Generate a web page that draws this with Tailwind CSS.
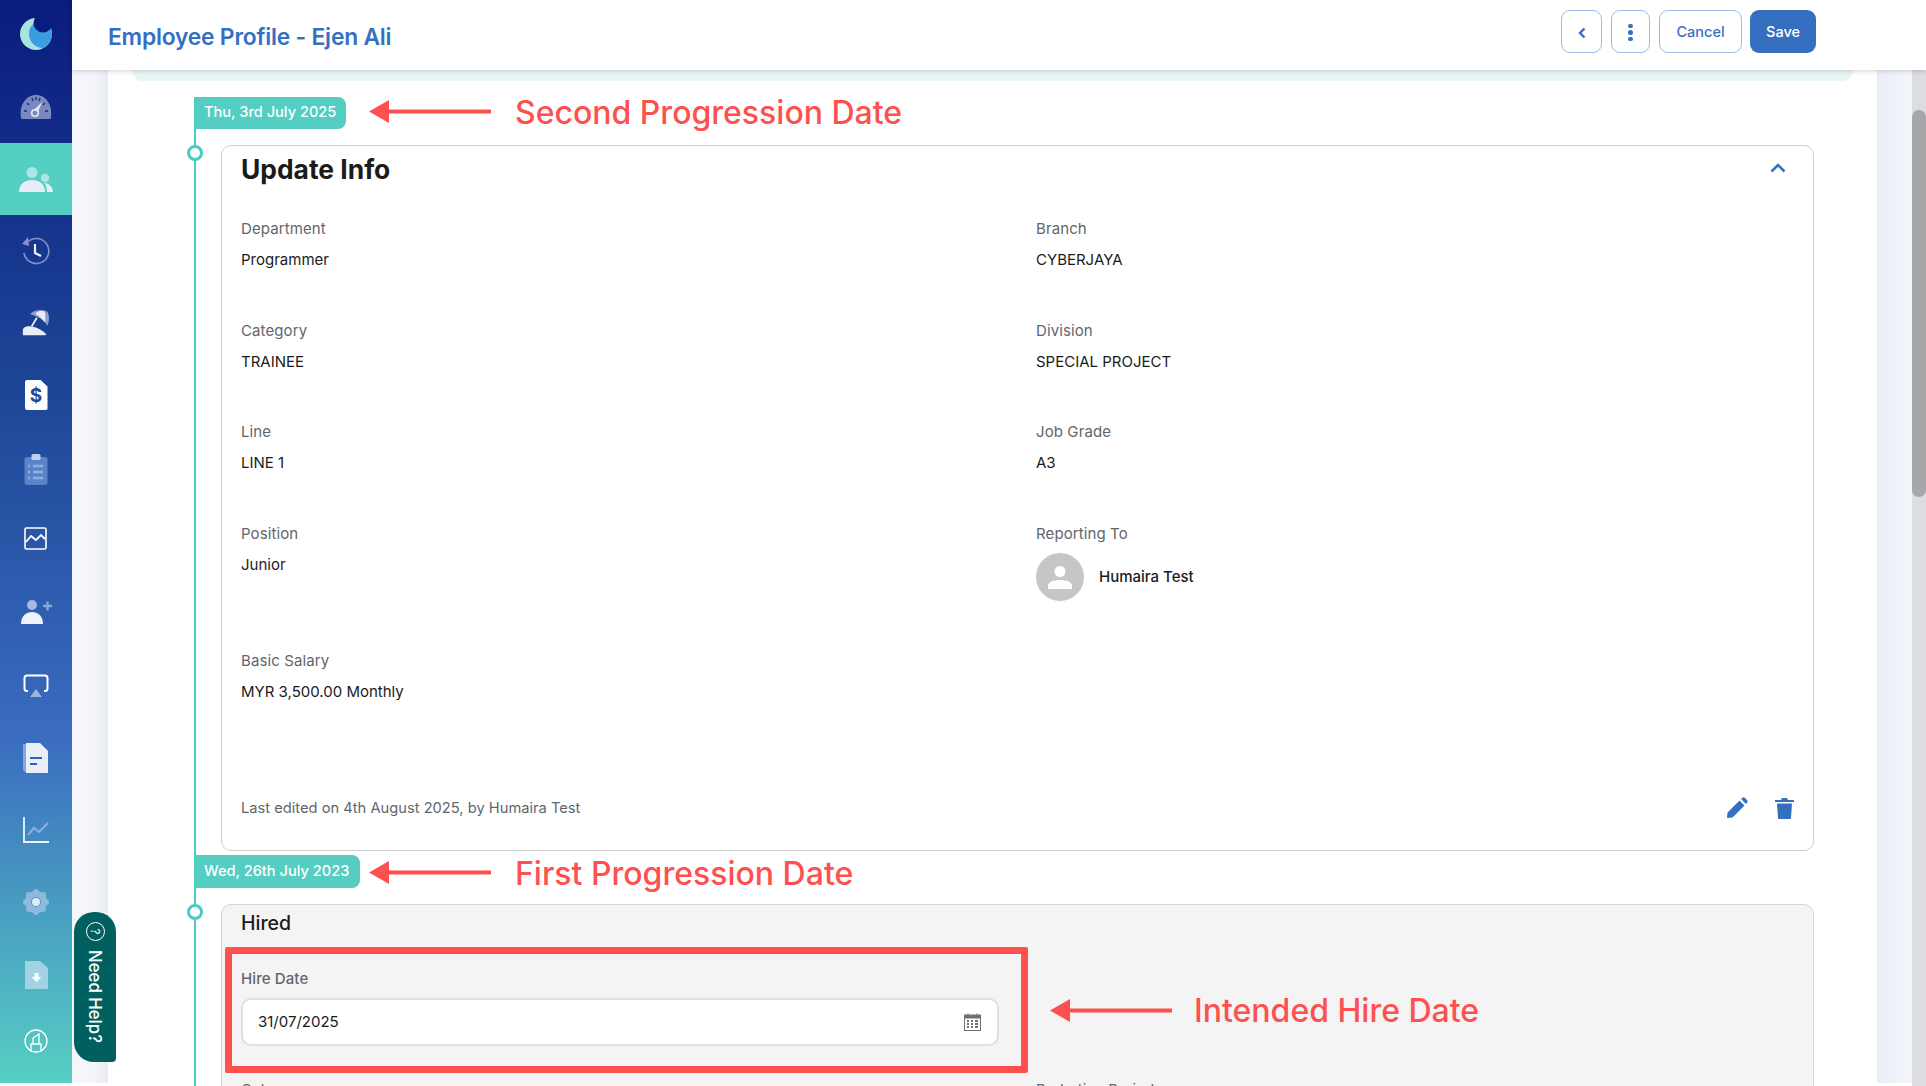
<!DOCTYPE html>
<html lang="en">
<head>
  <meta charset="UTF-8" />
  <title>Employee Profile - Ejen Ali</title>
  <script src="https://cdn.jsdelivr.net/npm/@tailwindcss/browser@4"></script>
</head>
<body class="bg-white font-['Inter','Liberation_Sans',sans-serif]">
<div class="relative flex h-[1086px] w-[1926px] overflow-hidden bg-white">

  <!-- Sidebar -->
  <aside class="flex h-[1083px] w-[72px] shrink-0 flex-col items-center bg-[linear-gradient(180deg,#0a1c7e_0%,#1f4899_38%,#3a6cbf_68%,#57cfc4_100%)]">
    <div class="flex h-[71px] w-full items-center justify-center pb-[3px]">
      <svg class="h-[40px] w-[40px]" viewBox="0 0 40 40"><defs><clipPath id="moon"><circle cx="20" cy="20" r="16"/></clipPath></defs><circle cx="20" cy="20" r="16" fill="#a5e4df"/><circle cx="27" cy="20" r="14" fill="#3a9ddd" clip-path="url(#moon)"/><circle cx="27" cy="9" r="9.5" fill="#0a1c7e"/></svg>
    </div>
    <div class="flex h-[72px] w-full items-center justify-center">
      <svg class="h-[36px] w-[36px]" viewBox="0 0 36 36"><path d="M3 29 C1 16 8 6 18 6 C28 6 35 16 33 29 Q33 30 31 30 H5 Q3 30 3 29Z" fill="#7b88bf"/><path d="M6 22h3M27 22h3M9 14l2 2M27 14l-2 2M14 9l1 3M22 9l-1 3M18 8v3" stroke="#1b2f86" stroke-width="1.5"/><path d="M24 13 L20 23 L16 21Z" fill="#e6eaf6"/><circle cx="17" cy="24" r="3.3" fill="none" stroke="#e6eaf6" stroke-width="1.6"/></svg>
    </div>
    <div class="flex h-[72px] w-full items-center justify-center bg-[#56cfc3]">
      <svg class="mt-[5px] h-[36px] w-[36px]" viewBox="0 0 36 36"><circle cx="14" cy="8.5" r="5.5" fill="#abe6e1"/><circle cx="27" cy="14" r="4.2" fill="#abe6e1"/><path d="M1 28 C1 20 7 16 14 16 C21 16 27 20 27 28Z" fill="#e8eef8"/><path d="M26 19 C31 19 35 23 35 28 H29 C29 24 28 21 26 19Z" fill="#e8eef8"/></svg>
    </div>
    <div class="flex h-[72px] w-full items-center justify-center">
      <svg class="h-[30px] w-[30px]" viewBox="0 0 30 30"><path d="M5 8 A12.5 12.5 0 1 1 3 17" fill="none" stroke="#8591c6" stroke-width="1.6"/><path d="M7 1 L8 10 L1 8Z" fill="#8591c6"/><path d="M14 8 V17 L20 20" fill="none" stroke="#eef1fa" stroke-width="2.2"/></svg>
    </div>
    <div class="flex h-[72px] w-full items-center justify-center">
      <svg class="h-[28px] w-[28px]" viewBox="0 0 32 32"><path d="M9 6 C14 0 24 0 29 3 C32 8 31 15 29 19 C25 12 17 8 9 6Z" fill="#8c9ccc"/><path d="M15 5 C19 2 24 2 26 3 C27 7 27 12 26 15 C23 11 19 8 15 5Z" fill="#e6ebf7"/><path d="M17 10 L11 20" stroke="#e6ebf7" stroke-width="2"/><path d="M1 30 V24 C1 21 6 19 11 20 C18 21 24 25 28 29 L26 30Z" fill="#e8edf8"/></svg>
    </div>
    <div class="flex h-[72px] w-full items-center justify-center">
      <div class="relative flex h-[30px] w-[23px] items-center justify-center rounded-[2px] bg-white [clip-path:polygon(0_0,70%_0,100%_22%,100%_100%,0_100%)]">
        <span class="text-[19px] leading-none font-bold text-[#1f4899]">$</span>
      </div>
    </div>
    <div class="flex h-[72px] w-full items-center justify-center">
      <svg class="mt-[4px] h-[32px] w-[24px]" viewBox="0 0 24 32"><rect x="0.500" y="4" width="23" height="28" rx="2.500" fill="#5b84c8"/><rect x="7.500" y="1" width="9" height="6" rx="1.5" fill="#bcd0ec"/><path d="M9 13h10M9 19h10M9 25h10" stroke="#92aedd" stroke-width="2.400"/><path d="M4 13h2M4 19h2M4 25h2" stroke="#92aedd" stroke-width="2.400"/></svg>
    </div>
    <div class="flex h-[72px] w-full items-center justify-center">
      <svg class="h-[24px] w-[24px]" viewBox="0 0 24 24"><rect x="1" y="1" width="21" height="21" rx="1.5" fill="none" stroke="#fff" stroke-width="1.6"/><path d="M2 15 L7 9 L12 13 L17 8 L21 12" fill="none" stroke="#fff" stroke-width="1.8"/></svg>
    </div>
    <div class="flex h-[72px] w-full items-center justify-center">
      <svg class="mt-[3px] h-[30px] w-[32px]" viewBox="0 0 32 30"><circle cx="12" cy="7" r="5" fill="#a4b9df"/><path d="M1 26 C1 18 6 14 12 14 C18 14 23 18 23 26Z" fill="#eef2fa"/><path d="M23 8h9M27.5 3.500v9" stroke="#8ba6d7" stroke-width="2.400"/></svg>
    </div>
    <div class="flex h-[72px] w-full items-center justify-center">
      <svg class="mt-[6px] h-[24px] w-[26px]" viewBox="0 0 26 24"><path d="M5 17 H4 Q1.500 17 1.500 14.500 V4 Q1.500 1.500 4 1.500 H22 Q24.500 1.500 24.500 4 V14.500 Q24.500 17 22 17 H21" fill="none" stroke="#fff" stroke-width="2"/><path d="M13 15 L19 23 H7Z" fill="#9db5df"/></svg>
    </div>
    <div class="flex h-[78px] w-full items-center justify-center">
      <svg class="h-[32px] w-[26px]" viewBox="0 0 26 32"><path d="M0 2 H4 V30 H3 Q0 30 0 27Z" fill="#87a6dc"/><path d="M3 1 H17 L25 9 V31 H3Z" fill="#e9eff9"/><path d="M7 16h12M7 22h7" stroke="#2e62b8" stroke-width="2.200"/></svg>
    </div>
    <div class="flex h-[66px] w-full items-center justify-center">
      <svg class="h-[28px] w-[28px]" viewBox="0 0 28 28"><path d="M2 1 V26 H27" fill="none" stroke="#eef3fb" stroke-width="1.800"/><path d="M6 19 L12 12 L17 16 L26 7" fill="none" stroke="#8eb0de" stroke-width="2"/></svg>
    </div>
    <div class="flex h-[78px] w-full items-center justify-center">
      <svg class="h-[26px] w-[26px]" viewBox="0 0 26 26"><circle cx="13" cy="13" r="8" fill="none" stroke="#8db9dd" stroke-width="6"/><g fill="#8db9dd"><circle cx="13" cy="3" r="3"/><circle cx="13" cy="23" r="3"/><circle cx="3" cy="13" r="3"/><circle cx="23" cy="13" r="3"/><circle cx="6" cy="6" r="3"/><circle cx="20" cy="6" r="3"/><circle cx="6" cy="20" r="3"/><circle cx="20" cy="20" r="3"/></g><circle cx="13" cy="13" r="4" fill="#dcedf6"/></svg>
    </div>
    <div class="flex h-[66px] w-full items-center justify-center">
      <svg class="h-[29px] w-[23px]" viewBox="0 0 23 29"><path d="M0 1 H15 L23 8 V29 H0Z" fill="#a3d2e2"/><path d="M9.500 13h4v4h3l-5 5-5-5h3Z" fill="#fff"/></svg>
    </div>
    <div class="flex h-[68px] w-full items-center justify-center">
      <svg class="h-[24px] w-[24px]" viewBox="0 0 24 24"><circle cx="12" cy="12" r="11" fill="none" stroke="#fff" stroke-width="1.300"/><path d="M7 23 V15 H17 V23 M9 15 V9 L15 5 V15" fill="none" stroke="#fff" stroke-width="1.300"/></svg>
    </div>
  </aside>

  <!-- Right of the sidebar -->
  <div class="flex min-w-0 flex-1 flex-col">
    <header class="z-10 flex h-[70px] shrink-0 items-start justify-between bg-white pr-[110px] pl-[36px] shadow-[0_1px_5px_rgba(0,0,0,0.18)]">
      <h1 class="mt-[22px] text-[22.800px] leading-[30px] font-semibold tracking-[-0.2px] text-[#3570c0]">Employee Profile - Ejen Ali</h1>
      <div class="mt-[10px] flex items-center">
        <button class="flex h-[43px] w-[41px] items-center justify-center rounded-[9px] border border-[#9dbbe5]">
          <svg class="mt-[3px] h-[12px] w-[8px]" viewBox="0 0 8 12"><path d="M6.500 1.500 L2 6 L6.500 10.500" fill="none" stroke="#3570c0" stroke-width="2.400"/></svg>
        </button>
        <button class="ml-[9px] flex h-[43px] w-[39px] flex-col items-center justify-center gap-[2px] rounded-[9px] border border-[#9dbbe5] pt-[2px]">
          <span class="h-[4.500px] w-[4.500px] rounded-full bg-[#3570c0]"></span>
          <span class="h-[4.500px] w-[4.500px] rounded-full bg-[#3570c0]"></span>
          <span class="h-[4.500px] w-[4.500px] rounded-full bg-[#3570c0]"></span>
        </button>
        <button class="ml-[9px] h-[43px] w-[83px] rounded-[9px] border border-[#9dbbe5] text-[14.500px] font-medium text-[#3570c0]">Cancel</button>
        <button class="ml-[8px] h-[43px] w-[66px] rounded-[9px] bg-[#3570c0] text-[14.500px] font-medium text-white">Save</button>
      </div>
    </header>

    <div class="flex min-h-0 flex-1">
      <div class="h-[1013px] w-[36px] shrink-0 bg-[linear-gradient(90deg,#f4f6fc_60%,#e8ebf2_100%)]"></div>

      <main class="h-[1016px] min-w-0 flex-1 overflow-hidden bg-white">
        <div class="mx-[24px] h-[11px] rounded-b-[12px] bg-[#e8f7f5]"></div>

        <!-- Timeline -->
        <div class="mt-[16px] ml-[86px] w-[1620px] border-l-2 border-[#4ccbc1]">
          <div class="flex h-[32px] w-[150px] items-center rounded-r-[8px] bg-[#54cdc3] pl-[8px] text-[14.600px] font-medium whitespace-nowrap text-white">Thu, 3rd July 2025</div>

          <div class="relative mt-[16px] ml-[25px] h-[706px] w-[1593px] rounded-[10px] border border-[#cfcfd1] bg-white px-[19px]">
            <span class="absolute top-[-1px] left-[-35px] h-[16px] w-[16px] rounded-full border-[3px] border-[#4ccbc1] bg-white"></span>
            <div class="flex items-start justify-between pt-[5px] pr-[8px]">
              <h2 class="text-[26.400px] leading-[36px] font-bold text-[#1b1b1b]">Update Info</h2>
              <svg class="mt-[11px] h-[12px] w-[16px]" viewBox="0 0 16 12"><path d="M1.500 9.500 L8 3 L14.500 9.500" fill="none" stroke="#3570c0" stroke-width="2.500"/></svg>
            </div>

            <div class="mt-[32px] grid grid-cols-[795px_1fr] text-[15px] leading-[20px]">
              <div class="h-[101.500px]"><p class="tracking-[0.1px] text-[#5f666d]">Department</p><p class="mt-[11px] text-[#1b1b1b]">Programmer</p></div>
              <div class="h-[101.500px]"><p class="tracking-[0.1px] text-[#5f666d]">Branch</p><p class="mt-[11px] text-[#1b1b1b]">CYBERJAYA</p></div>
              <div class="h-[101.500px]"><p class="tracking-[0.1px] text-[#5f666d]">Category</p><p class="mt-[11px] text-[#1b1b1b]">TRAINEE</p></div>
              <div class="h-[101.500px]"><p class="tracking-[0.1px] text-[#5f666d]">Division</p><p class="mt-[11px] text-[#1b1b1b]">SPECIAL PROJECT</p></div>
              <div class="h-[101.500px]"><p class="tracking-[0.1px] text-[#5f666d]">Line</p><p class="mt-[11px] text-[#1b1b1b]">LINE 1</p></div>
              <div class="h-[101.500px]"><p class="tracking-[0.1px] text-[#5f666d]">Job Grade</p><p class="mt-[11px] text-[#1b1b1b]">A3</p></div>
              <div class="h-[127px]"><p class="tracking-[0.1px] text-[#5f666d]">Position</p><p class="mt-[11px] text-[#1b1b1b]">Junior</p></div>
              <div class="h-[127px]">
                <p class="tracking-[0.1px] text-[#5f666d]">Reporting To</p>
                <div class="mt-[9px] flex items-center gap-[15px]">
                  <span class="flex h-[48px] w-[48px] items-center justify-center rounded-full bg-[#c6c6c6]">
                    <svg class="h-[26px] w-[26px]" viewBox="0 0 26 26"><circle cx="13" cy="7.500" r="5.500" fill="#fff"/><path d="M1 25 V22 C1 18 7 16 13 16 C19 16 25 18 25 22 V25Z" fill="#fff"/></svg>
                  </span>
                  <span class="font-medium text-[#1b1b1b]">Humaira Test</span>
                </div>
              </div>
              <div class="col-span-2"><p class="tracking-[0.1px] text-[#5f666d]">Basic Salary</p><p class="mt-[11px] text-[#1b1b1b]">MYR 3,500.00 Monthly</p></div>
            </div>

            <div class="absolute right-[19px] bottom-[31px] left-[19px] flex items-center justify-between">
              <p class="text-[14.700px] text-[#5f666d]">Last edited on 4th August 2025, by Humaira Test</p>
              <div class="flex items-center gap-[27px]">
                <svg class="h-[22px] w-[22px]" viewBox="0 0 22 22"><path d="M1 21 L1.500 15.500 L13.500 3.500 L18.500 8.500 L6.500 20.500Z M15 2 L17 0.500 Q18 0 19 1 L21 3 Q22 4 21.500 5 L20 7Z" fill="#3570c0"/></svg>
                <svg class="h-[22px] w-[19px]" viewBox="0 0 19 22"><path d="M0 3 H6 L7 1 H12 L13 3 H19 V5 H0Z M2 6.500 H17 L16 21 Q16 22 15 22 H4 Q3 22 3 21Z" fill="#3570c0"/></svg>
              </div>
            </div>
          </div>

          <div class="mt-[4px] flex h-[33px] w-[164px] items-center rounded-r-[8px] bg-[#54cdc3] pl-[8px] text-[14.600px] font-medium whitespace-nowrap text-white">Wed, 26th July 2023</div>

          <div class="relative mt-[16px] ml-[25px] h-[300px] w-[1593px] rounded-[10px] border border-[#d5d5d7] bg-[#f4f4f4] px-[19px]">
            <span class="absolute top-[-1px] left-[-35px] h-[16px] w-[16px] rounded-full border-[3px] border-[#4ccbc1] bg-white"></span>
            <h3 class="pt-[5px] text-[19.500px] leading-[27px] font-medium text-[#1b1b1b]">Hired</h3>
            <p class="mt-[32px] text-[15px] leading-[20px] font-medium tracking-[0.1px] text-[#5f666d]">Hire Date</p>
            <div class="mt-[9px] flex h-[48px] w-[758px] items-center justify-between rounded-[10px] border-2 border-[#dde1e4] bg-white pr-[16px] pl-[15px] text-[15px] text-[#1b1b1b]">
              <span>31/07/2025</span>
              <svg class="h-[18px] w-[17px]" viewBox="0 0 17 18"><rect x="0.500" y="2" width="16" height="15.500" fill="none" stroke="#6c7176"/><rect x="0.500" y="2" width="16" height="3.500" fill="#6c7176"/><path d="M4 0.500v3M13 0.500v3" stroke="#6c7176"/><path d="M3 8h2M7 8h2M11 8h3M3 11h2M7 11h2M11 11h3M3 14h2M7 14h2M11 14h3" stroke="#6c7176" stroke-width="1.800"/></svg>
            </div>
            <div class="mt-[34px] grid grid-cols-[795px_1fr] text-[15px] leading-[20px] text-[#5f666d]">
              <p>Category</p>
              <p>Probation Period</p>
            </div>
          </div>
        </div>
      </main>

      <div class="h-[1013px] w-[35px] shrink-0 bg-[linear-gradient(90deg,#e9edf7,#f4f6fb)]"></div>
      <div class="w-[14px] shrink-0 bg-[#dcdde1] pt-[40px]">
        <div class="h-[387px] rounded-full bg-[#a6a7a9]"></div>
      </div>
    </div>
  </div>

  <!-- Need Help tab -->
  <button class="absolute top-[912px] left-[74px] flex h-[150px] w-[42px] flex-col items-center rounded-t-[20px] rounded-b-[4px] rounded-bl-[20px] bg-[#005f5f] pt-[10px] text-white">
    <span class="flex h-[19px] w-[19px] rotate-90 items-center justify-center rounded-full border border-white text-[12px] leading-none">?</span>
    <span class="mt-[9px] text-[16.800px] leading-none font-medium [writing-mode:vertical-rl]">Need Help?</span>
  </button>

  <!-- Annotations over the screenshot -->
  <svg class="absolute top-[100px] left-[369px] h-[23px] w-[122px]" viewBox="0 0 122 23"><path d="M0 11.500 L20 0 V9.500 H122 V13.500 H20 V23Z" fill="#ff5050"/></svg>
  <p class="absolute top-[91px] left-[515px] text-[32px] leading-[44px] font-medium whitespace-nowrap text-[#ff5050]">Second Progression Date</p>
  <svg class="absolute top-[861px] left-[369px] h-[23px] w-[122px]" viewBox="0 0 122 23"><path d="M0 11.500 L20 0 V9.500 H122 V13.500 H20 V23Z" fill="#ff5050"/></svg>
  <p class="absolute top-[852px] left-[515px] text-[32px] leading-[44px] font-medium whitespace-nowrap text-[#ff5050]">First Progression Date</p>
  <div class="absolute top-[947px] left-[225px] h-[126px] w-[803px] rounded-[2px] border-[7px] border-[#ff5050]"></div>
  <svg class="absolute top-[999px] left-[1050px] h-[23px] w-[122px]" viewBox="0 0 122 23"><path d="M0 11.500 L20 0 V9.500 H122 V13.500 H20 V23Z" fill="#ff5050"/></svg>
  <p class="absolute top-[989px] left-[1194px] text-[32px] leading-[44px] font-medium whitespace-nowrap text-[#ff5050]">Intended Hire Date</p>
</div>
</body>
</html>
